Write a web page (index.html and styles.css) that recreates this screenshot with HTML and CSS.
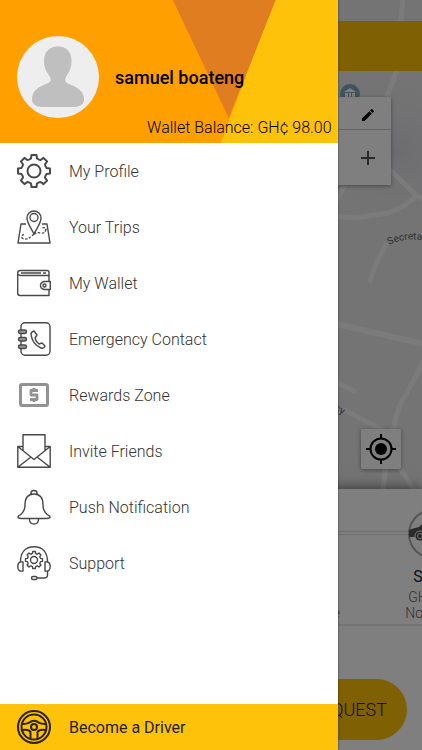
FILE: index.html
```html
<!DOCTYPE html>
<html lang="en">
<head>
<meta charset="utf-8">
<meta name="viewport" content="width=device-width, initial-scale=1">
<title>Menu</title>
<link rel="stylesheet" href="styles.css">
</head>
<body>
<div class="app">
  <main class="booking">
    <svg class="map" width="422" height="500" viewBox="0 0 422 500" aria-hidden="true">
      <defs>
        <radialGradient id="haze"><stop offset="0" stop-color="#d9dadf"/><stop offset="1" stop-color="#e8e8ea" stop-opacity="0"/></radialGradient>
        <path id="street" d="M389 245Q408 235 436 243"/>
      </defs>
      <ellipse cx="395" cy="150" rx="95" ry="80" fill="url(#haze)"/>
      <ellipse cx="370" cy="500" rx="110" ry="50" fill="url(#haze)"/>
      <g fill="none" stroke="#f6f6f6" stroke-width="5" stroke-linecap="round">
        <path d="M403-4L401 24L398 68L387 96"/>
        <path d="M330 216L355 218L388 213Q405 207 417 196L424 199M417 196L386 166"/>
        <path d="M345 185L336 202M386 245Q376 261 370 281"/>
        <path d="M336 324L424 344" stroke-width="6"/>
        <path d="M336 382L354 391M345 410L382 430"/>
        <path d="M424 361L400 405Q395 418 393 432M386 466L382 500M398 465L420 500"/>
      </g>
      <text class="street-name"><textPath href="#street">Secretariat</textPath></text>
      <text class="street-name" transform="translate(334 410) rotate(27)">cy</text>
      <circle cx="350" cy="94" r="10" fill="#7fa6b8"/>
      <path d="M344 92L350 88L356 92ZM345 93H348V99H345ZM349 93H351V99H349ZM352 93H355V99H352Z" fill="#fff"/>
    </svg>
    <header class="topbar"></header>
    <section class="stops">
      <button class="stop" aria-label="Edit">
        <svg width="12" height="12" viewBox="3 3 18 18"><path d="M3 17.25V21h3.75L17.8 9.94l-3.75-3.75zM20.7 7.04a1 1 0 0 0 0-1.41L18.4 3.3a1 1 0 0 0-1.41 0l-1.83 1.83 3.75 3.75z"/></svg>
      </button>
      <button class="stop stop-add" aria-label="Add stop">
        <svg width="16" height="16" viewBox="0 0 16 16"><path d="M8 1V15M1 8H15" stroke="#555" stroke-width="2"/></svg>
      </button>
    </section>
    <button class="locate" aria-label="My location">
      <svg width="30" height="30" viewBox="0 0 30 30"><circle cx="15" cy="15" r="10.5" fill="none" stroke="#000" stroke-width="2"/><circle cx="15" cy="15" r="6"/><path d="M15 0V5M15 25V30M0 15H5M25 15H30" stroke="#000" stroke-width="2"/></svg>
    </button>
    <section class="sheet">
      <div class="rides">
        <div class="ride ride-near"><span class="eta">Available</span></div>
        <div class="ride">
          <svg class="car" width="50" height="50" viewBox="0 0 50 50"><circle cx="25" cy="25" r="24" fill="#fff" stroke="#aaa" stroke-width="2"/><path d="M1 21Q6 19 11 18Q14 14 18 14H33Q39 18 47 20V28H1Z" fill="#555"/><path d="M14 19L19 16H24V19Z" fill="#ddd"/><circle cx="12" cy="27" r="5" fill="#444" stroke="#fff"/><circle cx="12" cy="27" r="2.5" fill="none" stroke="#fff"/><circle cx="38" cy="27" r="5" fill="#444"/></svg>
          <span class="ride-name">Saver</span>
          <span class="price">GH¢ 0.0</span>
          <span class="eta">No driver</span>
        </div>
      </div>
      <button class="request">REQUEST</button>
    </section>
  </main>
  <div class="scrim"></div>

  <aside class="drawer">
    <header class="profile">
      <svg class="profile-art" viewBox="0 0 338 143" preserveAspectRatio="none" aria-hidden="true">
        <path d="M0 0H338V143H0Z" fill="#ffa000"/>
        <path d="M275 0H338V143H221Z" fill="#ffc20a"/>
        <path d="M173 0H276L229 118Z" fill="#df7d20"/>
      </svg>
      <div class="person">
        <svg class="avatar" width="82" height="82" viewBox="0 0 82 82" role="img" aria-label="Avatar"><circle cx="41" cy="41" r="41" fill="#eee"/><path d="M41 10.5C32 10.5 27 16 27 25C27 34 31 37 33.5 42Q35 46 29 48C21 51 15 55 15 63Q15 71 27 71H55Q67 71 67 63C67 55 60 51 52 48Q47 46 48.5 42C51 37 54.500 34 54.5 25C54.5 16 50 10.5 41 10.5Z" fill="#bfbfbf"/></svg>
        <h1 class="name">samuel boateng</h1>
      </div>
      <p class="balance">Wallet Balance: GH¢ 98.00</p>
    </header>

    <nav class="menu">
      <a class="item" href="#profile">
        <svg class="icon heavy" viewBox="0 0 34 34"><defs><path id="gear" vector-effect="non-scaling-stroke" d="M-2.5-16L2.5-16L3-12.5Q5-11 6.7-11L9.5-13.1L13.1-9.5L11-6.7Q11-5 12.5-3L16-2.5V2.5L12.5 3Q11 5 11 6.7L13.1 9.5L9.5 13.1L6.7 11Q5 11 3 12.5L2.5 16H-2.5L-3 12.5Q-5 11-6.7 11L-9.5 13.1L-13.1 9.5L-11 6.7Q-11 5-12.5 3L-16 2.5V-2.5L-12.5-3Q-11-5-11-6.7L-13.1-9.5L-9.5-13.1L-6.7-11Q-5-11-3-12.5Z"/></defs><use href="#gear" x="17" y="17"/><circle cx="17" cy="17" r="6.500"/></svg>
        My Profile</a>
      <a class="item" href="#trips">
        <svg class="icon" viewBox="0 0 34 34"><path d="M9 14H4L1 33H33L30 14H25"/><path d="M17 24C14 18 10 13 10 8A7 7 0 0 1 24 8C24 13 20 18 17 24Z"/><circle cx="17" cy="7.5" r="4"/><path d="M17 24Q14 27 11 28.500T5 28Q4 25 8 24" stroke-dasharray="2.500 1.500"/><path d="M17 24Q20 22 24 23T29 19Q28 17 24 18" stroke-dasharray="2.500 1.500"/></svg>
        Your Trips</a>
      <a class="item" href="#wallet">
        <svg class="icon" viewBox="0 0 34 34"><path d="M32 17V6.5Q32 4.5 30 4.5H3Q.7 4.5 .7 7V27Q.7 29.5 3 29.5H32V23"/><path d="M1 8Q1.5 9.5 4 9.5H32M4 7H24M26 7H29"/><path d="M33.3 15.5H27Q23.5 16.5 23.5 19.5T27 23.5H33.3Z" fill="#fff"/><circle cx="27.5" cy="19.5" r="1.5"/></svg>
        My Wallet</a>
      <a class="item" href="#emergency">
        <svg class="icon" viewBox="0 0 34 34"><rect x="4" y=".7" width="29" height="32.6" rx="4"/><path d="M14 12Q14 10 17 9L20 13L18 16Q19 20 22 22L25 21L28 24Q27 27 24 26Q15 22 14 12Z"/><g fill="#999"><rect x="1.5" y="8" width="8" height="3.5" rx="1.7"/><rect x="1.5" y="15.5" width="8" height="3.5" rx="1.7"/><rect x="1.5" y="23" width="8" height="3.5" rx="1.7"/></g></svg>
        Emergency Contact</a>
      <a class="item" href="#rewards">
        <svg class="icon" viewBox="0 0 34 34"><rect x="3.5" y="6.5" width="27" height="21" rx="1.5" stroke="#929292" stroke-width="3"/><path d="M21 12.5H14V17H20V21.5H13M17 10V12.5M17 21.5V24" stroke="#929292" stroke-width="2.8"/></svg>
        Rewards Zone</a>
      <a class="item" href="#invite">
        <svg class="icon" viewBox="0 0 34 34"><path d="M6 17V.7H28V17M6 12.5H.8V33.3H33.2V12.5H28M.8 12.5L17 25.5L33.2 12.5M.8 33.3L14 23M33.2 33.3L20 23"/></svg>
        Invite Friends</a>
      <a class="item" href="#notifications">
        <svg class="icon" viewBox="0 0 34 34"><path d="M14 4.5V3A3 2.5 0 0 1 20 3V4.5M17 4C9 4 8 10 8 15C8 21 5 24 1.5 26Q-.5 28.5 5 28.5H29Q34.5 28.5 32.5 26C29 24 26 21 26 15C26 10 25 4 17 4Z"/><path d="M12.5 28.5V30Q13 34 17 34T21.5 30V28.5"/></svg>
        Push Notification</a>
      <a class="item" href="#support">
        <svg class="icon" viewBox="0 0 34 34"><path d="M3.5 16C3.5 7 8 .8 17 .8S30.5 7 30.5 16"/><path d="M6 16V25Q.8 26 .8 20.500T6 16ZM28 16V25Q33.2 26 33.2 20.500T28 16ZM30.5 25V29Q30.5 32 27 32H20"/><rect x="14.5" y="30.5" width="5.5" height="3" rx="1.5"/><use href="#gear" transform="translate(17 14) scale(.53)"/><circle cx="17" cy="14" r="3.5"/></svg>
        Support</a>
    </nav>

    <a class="driver" href="#driver">
      <svg class="icon dark" viewBox="0 0 34 34"><circle cx="17" cy="17" r="16"/><circle cx="17" cy="17" r="12.5"/><circle cx="17" cy="17" r="3"/><path d="M5 14Q11 14 14 11.500Q17 10 20 11.500Q23 14 29 14M5 20Q12 19 13.500 22V29M29 20Q22 19 20.500 22V29"/></svg>
      Become a Driver</a>
  </aside>
</div>
</body>
</html>
```
FILE: styles.css
```css
* { box-sizing: border-box; }

body {
  margin: 0;
  font-family: Roboto, "Liberation Sans", sans-serif;
  color: #444;
}

button {
  border: 0;
  padding: 0;
  font: inherit;
}

.app {
  position: relative;
  min-height: 100vh;
  display: grid;
  overflow: hidden;
}

/* Booking screen behind the drawer */
.booking {
  position: relative;
  display: flex;
  flex-direction: column;
  align-items: stretch;
  min-width: 0;
  overflow: hidden;
  background: #e8e8ea;
}

.map {
  position: absolute;
  top: 0;
  right: 0;
}

.street-name {
  font-size: 10px;
  fill: #666;
}

.topbar {
  position: relative;
  height: 50px;
  margin-top: 21px;
  background: #ffc107;
}

.stops {
  position: relative;
  margin: 26px 31px 0;
  background: #fff;
  box-shadow: 0 1px 4px rgba(0, 0, 0, .4);
}

.stop {
  display: flex;
  align-items: center;
  justify-content: flex-end;
  width: 100%;
  height: 32px;
  padding: 4px 17px 0 0;
  background: #fff;
}

.stop-add {
  height: 56px;
  padding: 0 15px 0 0;
  border-top: 1px solid #ccc;
}

.locate {
  position: relative;
  display: grid;
  place-items: center;
  align-self: flex-end;
  width: 40px;
  height: 40px;
  margin: auto 21px 20px;
  border-radius: 2px;
  background: #fff;
  box-shadow: 0 1px 4px rgba(0, 0, 0, .4);
}

.sheet {
  position: relative;
  padding-bottom: 10px;
  background: #fff;
  box-shadow: 0 -2px 10px rgba(0, 0, 0, .45);
}

.rides {
  display: flex;
  justify-content: flex-end;
  height: 137px;
  margin-right: -81px;
  padding-top: 20px;
  border-bottom: 2px solid #e8e8e8;
  background: linear-gradient(#ddd 1px, transparent 1px 3px, #ddd 3px 4px, transparent 4px) 0 42px no-repeat;
}

.ride {
  display: flex;
  flex-direction: column;
  align-items: center;
  flex: 0 0 140px;
  color: #666;
  font-size: 14px;
  font-weight: 300;
  line-height: 16px;
}

.ride-near {
  justify-content: flex-end;
  align-items: flex-end;
  padding: 0 23px 3px 0;
}

.ride-name {
  margin: 10px 0 4px;
  font-size: 16px;
  font-weight: 400;
  color: #222;
}

.request {
  display: block;
  width: calc(100% - 30px);
  height: 61px;
  margin: 53px 15px 0;
  padding-right: 20px;
  border-radius: 31px;
  background: #ffc107;
  color: #222;
  font-size: 18px;
  font-weight: 300;
  text-align: right;
}

.scrim {
  position: absolute;
  inset: 0;
  background: rgba(0, 0, 0, .5);
}

/* Drawer */
.drawer {
  position: absolute;
  inset: 0 auto 0 0;
  display: flex;
  flex-direction: column;
  width: 80%;
  background: #fff;
  box-shadow: 0 0 2px rgba(0, 0, 0, .5);
}

.profile {
  position: relative;
  display: flex;
  flex-direction: column;
  padding: 36px 6px 5px 17px;
  color: #000;
}

.profile-art {
  position: absolute;
  inset: 0;
  width: 100%;
  height: 100%;
}

.person {
  position: relative;
  display: flex;
  align-items: center;
  gap: 16px;
}

.name {
  margin: 0;
  font-size: 18px;
  font-weight: 500;
}

.balance {
  position: relative;
  margin: 0;
  font-size: 16px;
  font-weight: 300;
  line-height: 20px;
  text-align: right;
}

.menu {
  display: flex;
  flex-direction: column;
  flex: 1;
}

.item,
.driver {
  display: flex;
  align-items: center;
  gap: 18px;
  height: 56px;
  padding-left: 17px;
  color: #333;
  font-size: 16px;
  font-weight: 300;
  text-decoration: none;
}

.driver {
  height: 46px;
  background: #ffc20a;
  color: #222;
  font-weight: 400;
}

.icon {
  flex: none;
  width: 34px;
  height: 34px;
  overflow: visible;
  fill: none;
  stroke: #484848;
  stroke-width: 1.4;
  stroke-linejoin: round;
}

.heavy { stroke-width: 2; }

.dark {
  stroke: #2b2207;
  stroke-width: 2;
}
```
